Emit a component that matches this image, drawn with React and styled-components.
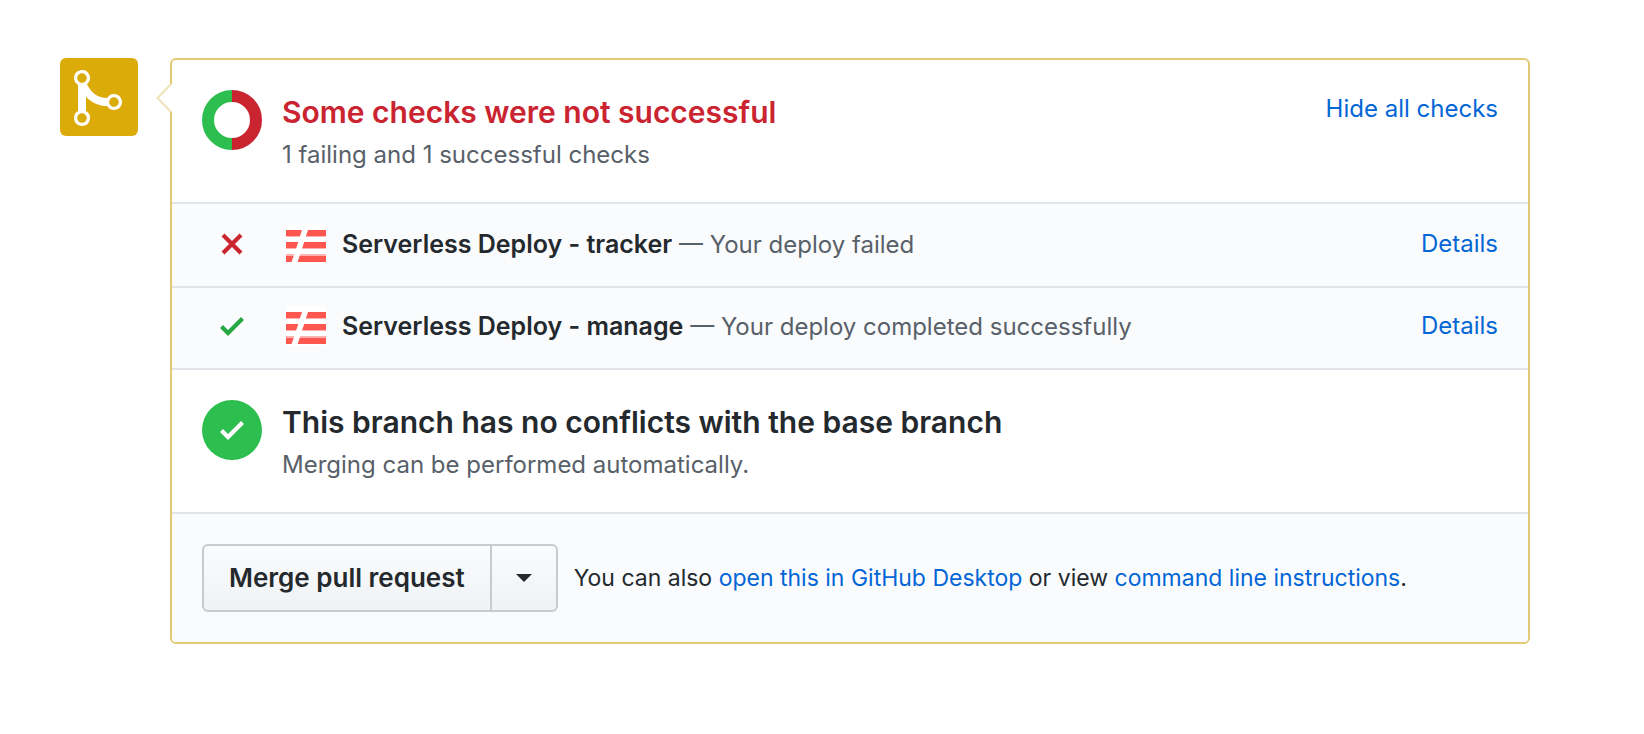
import React from "react";
import styled, { createGlobalStyle } from "styled-components";

const GlobalStyle = createGlobalStyle`
  *, *::before, *::after { box-sizing: border-box; }
  body {
    margin: 0;
    background: #fff;
    color: #24292e;
    font-family: Inter, "Liberation Sans", sans-serif;
    font-size: 24px;
    line-height: 38px;
  }
`;

const Page = styled.main`
  display: flex;
  align-items: flex-start;
  gap: 32px;
  padding: 58px 114px 58px 60px;
`;

const Avatar = styled.div`
  flex: none;
  display: flex;
  padding: 8px 16px 6px 14px;
  border-radius: 6px;
  background: #dbab09;
  color: #fff;
`;

const Panel = styled.section`
  position: relative;
  flex: 1;
  min-width: 0;
  border: 2px solid #e2cb74;
  border-radius: 6px;
`;

const Pointer = styled.svg`
  position: absolute;
  left: -16px;
  top: 24px;
`;

const Summary = styled.div`
  display: flex;
  align-items: flex-start;
  gap: 20px;
  padding: 30px 30px 26px;
`;

const SummaryText = styled.div`
  flex: 1;
`;

const Title = styled.h2`
  margin: 0;
  font-size: 30px;
  line-height: 44px;
  font-weight: 600;
  color: ${(p) => (p.$failed ? "#cb2431" : "#24292e")};
`;

const Note = styled.p`
  margin: 0;
  line-height: 42px;
  color: #586069;
`;

const StatusCircle = styled.span`
  flex: none;
  display: flex;
  align-items: center;
  justify-content: center;
  width: 60px;
  height: 60px;
  border-radius: 50%;
  background: #2cbe4e;
  color: #fff;
`;

const Link = styled.a`
  color: #0366d6;
  text-decoration: none;
  &:hover { text-decoration: underline; }
`;

const CheckList = styled.ul`
  margin: 0;
  padding: 0;
  list-style: none;
  border-bottom: 2px solid #e1e4e8;
`;

const CheckRow = styled.li`
  display: flex;
  align-items: center;
  padding: 18px 30px 22px;
  border-top: 2px solid #e1e4e8;
  background: #fafbfd;
  &:first-child { padding-top: 20px; }
`;

const CheckState = styled.span`
  flex: none;
  display: flex;
  justify-content: center;
  width: 60px;
  margin-right: 24px;
  color: ${(p) => (p.$failed ? "#cb2431" : "#28a745")};
`;

const CheckText = styled.span`
  flex: 1;
  margin-left: 16px;
  color: #586069;
`;

const CheckName = styled.strong`
  font-size: 25px;
  font-weight: 600;
  color: #24292e;
`;

const Footer = styled.div`
  display: flex;
  align-items: center;
  gap: 16px;
  padding: 30px;
  border-top: 2px solid #e1e4e8;
  border-radius: 0 0 4px 4px;
  background: #fafbfd;
`;

const FooterText = styled.p`
  margin: 0;
  font-size: 23px;
`;

const ButtonGroup = styled.div`
  flex: none;
  display: flex;
  border: 2px solid #c8cbce;
  border-radius: 6px;
  background: linear-gradient(#fafbfc, #eff3f6);
`;

const Button = styled.button`
  display: flex;
  align-items: center;
  justify-content: center;
  height: 64px;
  padding: 0 25px;
  border: 0;
  background: none;
  color: #24292e;
  font: inherit;
  font-size: 26px;
  font-weight: 600;
  cursor: pointer;
  & + & {
    padding: 0 24px;
    border-left: 2px solid #c8cbce;
  }
`;

const MergeIcon = () => (
  <svg width="48" height="64" viewBox="0 0 12 16" fill="currentColor" aria-hidden="true">
    <path
      fillRule="evenodd"
      d="M10 7c-.73 0-1.38.41-1.73 1.02V8C7.22 7.98 6 7.64 5.14 6.98c-.75-.58-1.5-1.61-1.89-2.44A1.993 1.993 0 0 0 2 .99C.89.99 0 1.89 0 3a2 2 0 0 0 1 1.72v6.56c-.6.35-1 .99-1 1.72 0 1.11.89 2 2 2a1.993 1.993 0 0 0 1-3.72V7.67c.67.7 1.44 1.27 2.3 1.69.86.42 2.03.63 2.97.64v-.02c.36.61 1 1.02 1.73 1.02 1.11 0 2-.89 2-2 0-1.11-.89-2-2-2zM3.2 13c0 .66-.55 1.2-1.2 1.2-.65 0-1.2-.55-1.2-1.2 0-.65.55-1.2 1.2-1.2.65 0 1.2.55 1.2 1.2zm0-10c0 .66-.55 1.2-1.2 1.2C1.35 4.2.8 3.65.8 3c0-.65.55-1.2 1.2-1.2.65 0 1.2.55 1.2 1.2zM10 10.2c-.66 0-1.2-.55-1.2-1.2 0-.65.55-1.2 1.2-1.2.65 0 1.2.55 1.2 1.2 0 .65-.55 1.2-1.2 1.2z"
    />
  </svg>
);

const CheckIcon = () => (
  <svg width="24" height="32" viewBox="0 0 12 16" fill="currentColor" aria-hidden="true">
    <path d="M12 5l-8 8-4-4 1.5-1.5L4 10l6.5-6.5L12 5z" />
  </svg>
);

const CrossIcon = () => (
  <svg width="24" height="32" viewBox="0 0 12 16" fill="currentColor" aria-hidden="true">
    <path d="M7.48 8l3.75 3.75-1.48 1.48L6 9.48l-3.75 3.75-1.48-1.48L4.52 8 .77 4.25l1.48-1.48L6 6.52l3.75-3.75 1.48 1.48L7.48 8z" />
  </svg>
);

const StatusDonut = () => (
  <svg width="60" height="60" viewBox="0 0 60 60" fill="none" strokeWidth="12" aria-hidden="true">
    <path d="M30 6a24 24 0 0 0 0 48" stroke="#2cbe4e" />
    <path d="M30 6a24 24 0 0 1 0 48" stroke="#cb2431" />
  </svg>
);

const ServerlessLogo = () => (
  <svg width="40" height="40" viewBox="0 0 40 40" aria-hidden="true">
    <rect width="40" height="40" rx="4" fill="#fff" />
    <g fill="#fd5750">
      <path d="M0 6h16l-2 6H0zM22 6h18v6H20z" />
      <path d="M0 18h12.3l-2 6H0zM18.2 18H40v6H16.2z" />
      <path d="M0 32h7.6l-2 6H0zM13.6 32H40v6H11.6z" />
    </g>
    <g fill="#fd5750" opacity="0.45">
      <path d="M0 12h14l-.4 1H0zM20 12h20v1H19.6z" />
      <path d="M0 24h10.3l-.4 1H0zM16.2 24H40v1H15.8z" />
      <path d="M0 30h8.2l-.6 2H0zM14.2 30H40v2H13.6z" />
    </g>
  </svg>
);

const CaretIcon = () => (
  <svg width="16" height="8" viewBox="0 0 16 8" fill="currentColor" aria-hidden="true">
    <path d="M0 0h16L8 8z" />
  </svg>
);

const checks = [
  { name: "Serverless Deploy - tracker", result: "Your deploy failed", failed: true },
  { name: "Serverless Deploy - manage", result: "Your deploy completed successfully", failed: false },
];

export default function App() {
  return (
    <>
      <GlobalStyle />
      <Page>
        <Avatar>
          <MergeIcon />
        </Avatar>
        <Panel>
          <Pointer width="16" height="28" viewBox="0 0 16 28" aria-hidden="true">
            <path d="M16 0L2 14l14 14z" fill="#fff" />
            <path d="M15 0L1.5 14 15 28" fill="none" stroke="#efe2b4" strokeWidth="2" />
          </Pointer>
          <Summary>
            <StatusDonut />
            <SummaryText>
              <Title $failed>Some checks were not successful</Title>
              <Note>1 failing and 1 successful checks</Note>
            </SummaryText>
            <Link href="#checks">Hide all checks</Link>
          </Summary>
          <CheckList id="checks">
            {checks.map((check) => (
              <CheckRow key={check.name}>
                <CheckState $failed={check.failed}>
                  {check.failed ? <CrossIcon /> : <CheckIcon />}
                </CheckState>
                <ServerlessLogo />
                <CheckText>
                  <CheckName>{check.name}</CheckName> — {check.result}
                </CheckText>
                <Link href="#details">Details</Link>
              </CheckRow>
            ))}
          </CheckList>
          <Summary>
            <StatusCircle>
              <CheckIcon />
            </StatusCircle>
            <SummaryText>
              <Title>This branch has no conflicts with the base branch</Title>
              <Note>Merging can be performed automatically.</Note>
            </SummaryText>
          </Summary>
          <Footer>
            <ButtonGroup>
              <Button type="button">Merge pull request</Button>
              <Button type="button" aria-label="Select merge method">
                <CaretIcon />
              </Button>
            </ButtonGroup>
            <FooterText>
              You can also <Link href="#desktop">open this in GitHub Desktop</Link> or view{" "}
              <Link href="#command-line">command line instructions</Link>.
            </FooterText>
          </Footer>
        </Panel>
      </Page>
    </>
  );
}
